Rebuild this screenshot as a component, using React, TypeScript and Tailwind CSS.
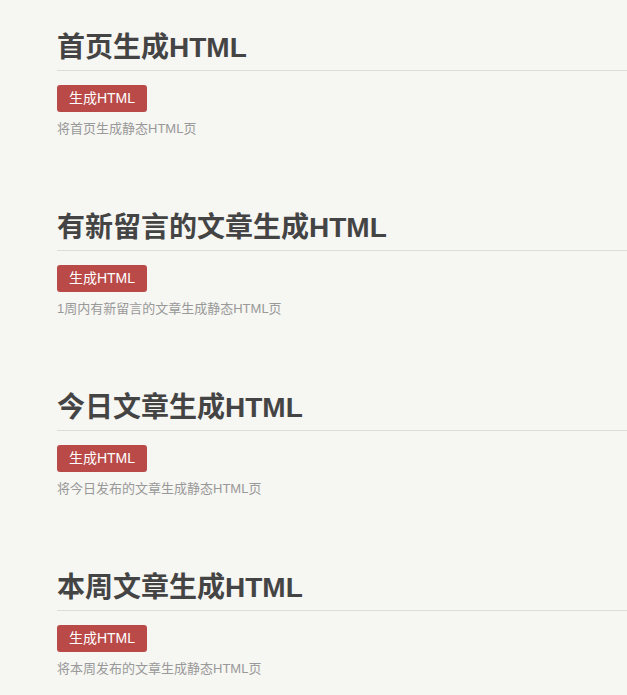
const sections = [
  { title: "首页生成HTML", desc: "将首页生成静态HTML页" },
  { title: "有新留言的文章生成HTML", desc: "1周内有新留言的文章生成静态HTML页" },
  { title: "今日文章生成HTML", desc: "将今日发布的文章生成静态HTML页" },
  { title: "本周文章生成HTML", desc: "将本周发布的文章生成静态HTML页" },
];

export default function App() {
  return (
    <div
      className="min-h-[695px] bg-[#f6f6f2] pl-[57px] pt-[32px]"
      style={{ fontFamily: '"Liberation Sans", Arial, "Noto Sans CJK SC", sans-serif' }}
    >
      {sections.map((s) => (
        <div key={s.title} className="mb-[74px]">
          <h2 className="border-b border-[#dcdcd8] pb-[7px] text-[28px] font-bold leading-[31px] text-[#444]">
            {s.title}
          </h2>
          <button className="mt-[14px] flex h-[27px] w-[90px] items-center justify-center rounded-[3px] bg-[#b94a48] text-[14px] text-white">
            生成HTML
          </button>
          <p className="mt-[8px] text-[13px] leading-[18px] text-[#999]">{s.desc}</p>
        </div>
      ))}
    </div>
  );
}
